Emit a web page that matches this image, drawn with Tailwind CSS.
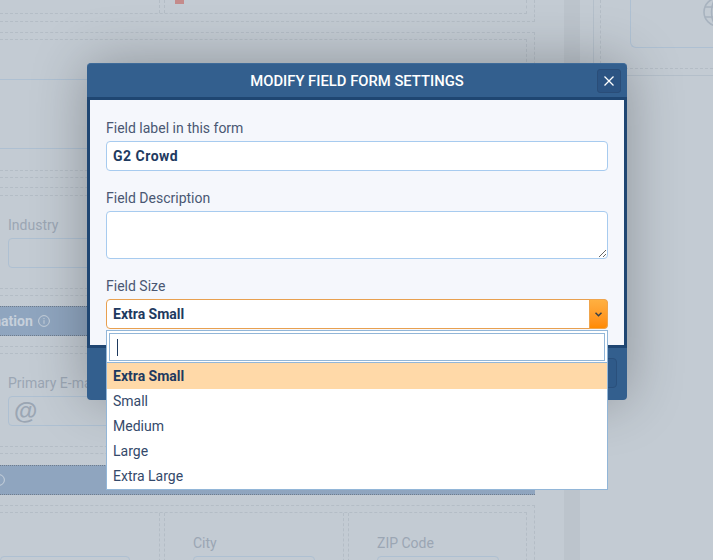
<!DOCTYPE html>
<html lang="en">
<head>
    <meta charset="UTF-8">
    <title>Modify Field Form Settings</title>
    <script src="https://cdn.jsdelivr.net/npm/@tailwindcss/browser@4"></script>
</head>
<body class="font-['Roboto',sans-serif] bg-[#c3cbd3] text-[14px]">
    <div class="relative w-[713px] h-[560px] overflow-hidden">
        <!-- dimmed page behind the modal -->
        <div class="flex h-full text-[#9ba6b3]">
            <div class="w-[535px] shrink-0">
                <div class="h-[22px] border-b border-r border-dashed border-[#b4bdc6]">
                    <div class="flex h-[14px] mr-[7px] border-b border-r border-dashed border-[#b4bdc6]">
                        <div class="w-[160px] border-r border-dashed border-[#b4bdc6]"></div>
                        <div class="ml-[4px] pl-[10px] border-l border-dashed border-[#b4bdc6]">
                            <div class="w-[9px] h-[4px] bg-[#c48b8b]"></div>
                        </div>
                    </div>
                </div>
                <div class="mt-[10px] h-[146px] pt-[6px] border-t border-r border-b border-dashed border-[#b4bdc6]">
                    <div class="h-[132px] mr-[7px] pt-[39px] border-t border-r border-b border-dashed border-[#b4bdc6]">
                        <div class="h-[70px] border-y border-[#aec0d2]"></div>
                    </div>
                </div>
                <div class="mt-[9px] h-[109px] pt-[7px] border-t border-r border-b border-dashed border-[#b4bdc6]">
                    <div class="h-[94px] mr-[7px] pt-[20px] pl-[8px] border-t border-r border-b border-dashed border-[#b4bdc6]">
                        <p class="leading-[18px]">Industry</p>
                        <div class="mt-[4px] w-[300px] h-[30px] rounded-[4px] border border-[#aec0d2]"></div>
                    </div>
                </div>
                <div class="mt-[10px] h-[30px] flex items-center gap-[5px] ml-[-41px] border-y border-dotted border-[#6f7c8c] bg-[#8fa5bf] text-[#c6d0db] font-bold">
                    <span>Information</span>
                    <svg class="w-[12px] h-[12px]" viewBox="0 0 12 12" fill="none" stroke="currentColor"><circle cx="6" cy="6" r="5.4"/><path d="M6 5.2v3.6M6 3v1.2"/></svg>
                </div>
                <div class="mt-[10px] h-[108px] pt-[6px] border-t border-r border-b border-dashed border-[#b4bdc6]">
                    <div class="h-[94px] mr-[7px] pt-[20px] pl-[8px] border-t border-r border-b border-dashed border-[#b4bdc6]">
                        <p class="leading-[18px]">Primary E-mail</p>
                        <div class="mt-[4px] w-[300px] h-[30px] pl-[5px] rounded-[4px] border border-[#aec0d2] font-['Liberation_Sans',sans-serif] font-bold text-[24px] leading-[28px]">@</div>
                    </div>
                </div>
                <div class="mt-[11px] h-[30px] flex items-center gap-[5px] ml-[-105px] border-y border-dotted border-[#6f7c8c] bg-[#8fa5bf] text-[#c6d0db] font-bold">
                    <span>Details section</span>
                    <svg class="w-[12px] h-[12px]" viewBox="0 0 12 12" fill="none" stroke="currentColor"><circle cx="6" cy="6" r="5.4"/><path d="M6 5.2v3.6M6 3v1.2"/></svg>
                </div>
                <div class="mt-[10px] h-[60px] pt-[6px] border-t border-r border-dashed border-[#b4bdc6]">
                    <div class="flex h-[60px] mr-[7px] border-t border-r border-dashed border-[#b4bdc6]">
                        <div class="w-[160px] pt-[43px] border-r border-dashed border-[#b4bdc6]">
                            <div class="w-[130px] h-[20px] rounded-[4px] border border-[#aec0d2]"></div>
                        </div>
                        <div class="w-[180px] ml-[4px] pl-[28px] pt-[21px] border-x border-dashed border-[#b4bdc6]">
                            <p class="leading-[18px]">City</p>
                            <div class="mt-[4px] w-[122px] h-[20px] rounded-[4px] border border-[#aec0d2]"></div>
                        </div>
                        <div class="flex-1 ml-[4px] pl-[28px] pt-[21px] border-l border-dashed border-[#b4bdc6]">
                            <p class="leading-[18px]">ZIP Code</p>
                            <div class="mt-[4px] w-[122px] h-[20px] rounded-[4px] border border-[#aec0d2]"></div>
                        </div>
                    </div>
                </div>
            </div>
            <div class="ml-[29px] w-[16px] shrink-0 bg-[#bcc4cc]"></div>
            <div class="ml-[13px] flex-1">
                <div class="h-[76px] border-l border-b border-[#b4bfca]">
                    <div class="h-[69px] ml-[6px] border-l border-b border-dashed border-[#b4bdc6]">
                        <div class="relative h-[48px] ml-[29px] rounded-bl-[6px] border-l border-b border-[#aec0d2] overflow-hidden">
                            <svg class="absolute left-[72px] top-[-3px] w-[30px] h-[30px]" viewBox="0 0 30 30" fill="none" stroke="#a8b3bf" stroke-width="1.6"><circle cx="15" cy="15" r="14"/><ellipse cx="15" cy="15" rx="6.5" ry="14"/><path d="M2 10h26M2 20h26"/></svg>
                        </div>
                    </div>
                </div>
            </div>
        </div>

        <!-- modal -->
        <div class="absolute left-[87px] top-[63px] w-[540px] h-[337px] flex flex-col rounded-[4px] bg-[#335f8e] border-t border-[#3f6b99] shadow-[0_0_55px_rgba(0,0,0,0.28)]">
            <div class="h-[33px] shrink-0 flex items-center justify-center relative">
                <h2 class="pt-px text-white text-[14.8px] font-medium uppercase">Modify Field Form Settings</h2>
                <button class="absolute right-[6px] top-[5px] w-[24px] h-[24px] flex items-center justify-center rounded-[3px] bg-[#2c5483] border border-[#2a4d78]">
                    <svg class="w-[10px] h-[10px]" viewBox="0 0 10 10" stroke="white" stroke-width="1.3"><path d="M0.5 0.5l9 9M9.5 0.5l-9 9"/></svg>
                </button>
            </div>
            <div class="h-[251px] shrink-0 border-[3px] border-[#1f4672] bg-[#f5f7fc] px-[16px] pt-[18px]">
                <label class="block leading-[20px] text-[#4a5773]">Field label in this form</label>
                <input type="text" value="G2 Crowd" class="mt-[3px] block w-full h-[30px] px-[6px] bg-white rounded-[4px] border border-[#a7cbef] font-bold tracking-[0.5px] text-[#1e3a5f] outline-none">
                <label class="block mt-[17px] leading-[20px] text-[#4a5773]">Field Description</label>
                <textarea class="mt-[3px] block w-full h-[48px] px-[6px] bg-white rounded-[4px] border border-[#a7cbef] outline-none resize-y"></textarea>
                <label class="block mt-[17px] leading-[20px] text-[#4a5773]">Field Size</label>
                <div class="mt-[3px] flex items-center h-[30px] pl-[6px] bg-white rounded-[4px] border border-[#e8a050] text-[#1e3a5f]">
                    <span class="flex-1 font-bold">Extra Small</span>
                    <div class="w-[19px] h-[30px] -mr-px flex items-center justify-center rounded-r-[4px] border border-[#f0a54c] bg-gradient-to-b from-[#ffb040] to-[#ff8a00]">
                        <svg class="w-[7px] h-[5px]" viewBox="0 0 7 5" fill="none" stroke="#37404a" stroke-width="1.5"><path d="M0.5 0.8L3.5 3.8L6.5 0.8"/></svg>
                    </div>
                </div>
            </div>
            <div class="flex-1 flex justify-end pt-[10px] pr-[10px]">
                <div class="w-[100px] h-[30px] rounded-[4px] bg-[#2f5a89] border border-[#2a507c]"></div>
            </div>

            <!-- select2 dropdown, hangs out of the modal -->
            <div class="absolute left-[19px] top-[266px] w-[502px] bg-white border border-[#92b6d8] text-[#34496b]">
                <div class="m-[2px] mb-[1px] h-[28px] flex items-center pl-[7px] border border-[#92b6d8]">
                    <div class="w-px h-[17px] bg-[#1e3a5f]"></div>
                </div>
                <ul class="mt-[1px] border-t border-[#92b6d8]">
                    <li class="h-[26px] leading-[26px] px-[6px] bg-[#ffd9a8] font-bold text-[#1e3a5f]">Extra Small</li>
                    <li class="h-[25px] leading-[25px] px-[6px]">Small</li>
                    <li class="h-[25px] leading-[25px] px-[6px]">Medium</li>
                    <li class="h-[25px] leading-[25px] px-[6px]">Large</li>
                    <li class="h-[25px] leading-[25px] px-[6px]">Extra Large</li>
                </ul>
            </div>
        </div>
    </div>
</body>
</html>
